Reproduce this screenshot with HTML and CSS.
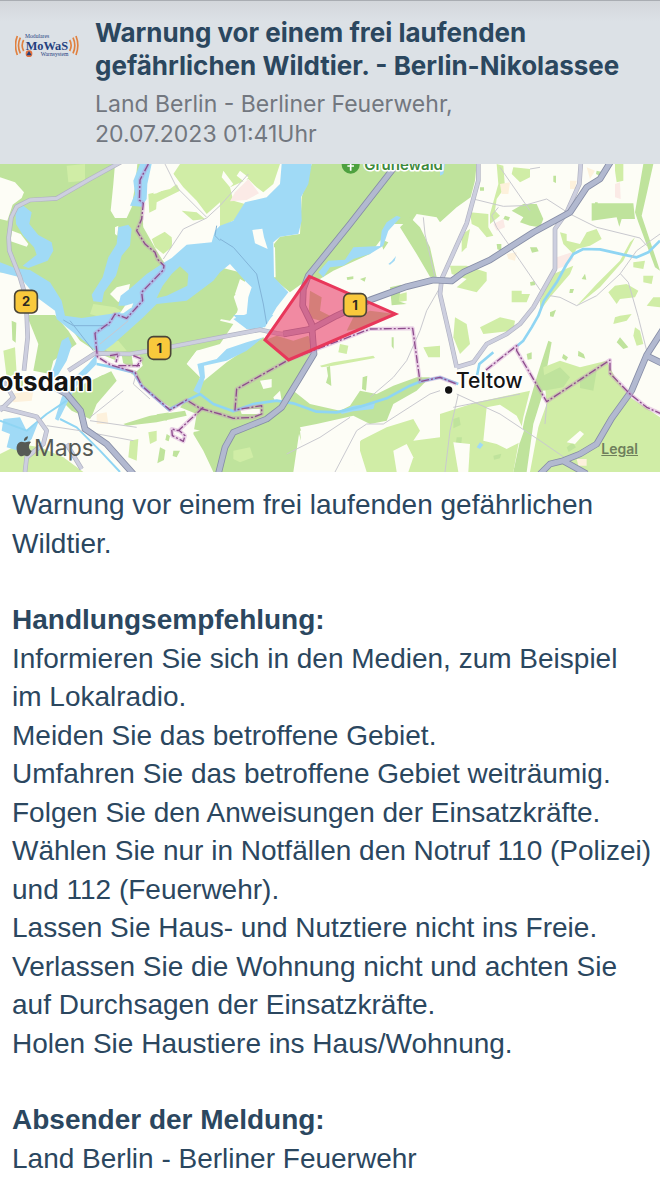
FILE: index.html
```html
<!DOCTYPE html>
<html lang="de">
<head>
    <meta charset="UTF-8">
    <meta name="viewport" content="width=device-width, initial-scale=1.0">
    <title>Warnung - Berlin-Nikolassee</title>
    <link rel="stylesheet" href="styles.css">
</head>
<body>
    <header class="warning-header">
        <svg class="logo" viewBox="0 0 192 72" role="img" aria-label="MoWaS">
            <g class="logo-waves">
                <path d="M26 18Q17 34 26 51M16 11Q5 34 16 58M7 6Q-4 34 7 63"/>
                <path d="M164 18Q173 34 164 51M174 11Q185 34 174 58M183 6Q194 34 183 63"/>
            </g>
            <text class="logo-small" x="30" y="13">Modulares</text>
            <text class="logo-name" x="32" y="48">MoWaS</text>
            <text class="logo-small" x="77" y="65">Warnsystem</text>
            <circle cx="42" cy="59" r="10" fill="#e2703c"/>
            <path d="M42 51l8 13H34z" fill="#24407e"/>
        </svg>
        <div class="warning-heading">
            <h1>Warnung vor einem frei laufenden gefährlichen Wildtier. - Berlin-Nikolassee</h1>
            <p class="source">Land Berlin - Berliner Feuerwehr,<br>20.07.2023 01:41Uhr</p>
        </div>
    </header>

    <div class="map">
        <svg class="map-canvas" viewBox="0 0 1980 924" role="img" aria-label="Karte des Warngebiets">
            <rect class="land" width="1980" height="924"/>

            <!-- woods -->
            <g class="forest">
                <path d="M0 0H430L425 110 430 190 470 260 495 300 660 310 740 330 735 350 690 300 735 350 700 400 660 470 700 480 660 540 590 560 560 600 600 640 580 700 520 735 430 680 400 610 300 570 240 530 160 420 90 330 0 325Z"/>
                <path d="M935 0H1430L1425 50 1412 100 1370 130 1320 175 1310 160 1250 150 1230 180 1180 180 1140 230 1110 270 1000 320 960 345 925 345 870 385 822 345 822 240 840 218 900 210 905 100Z"/>
                <path d="M1230 160L1260 190 1290 250 1310 340 1290 338 1250 270 1200 190Z"/>
                <path d="M600 660L680 595 790 520 865 590 935 560 900 630 880 680 930 720 1020 740 1050 725 1080 680 1130 690 1180 665 1250 640 1290 640 1250 680 1180 720 1160 770 1110 780 1060 755 950 780 900 790 880 924H640L610 860 580 810 590 750 540 730Z"/>
                <path d="M795 528L830 515 880 530 925 515 940 550 866 590Z"/>
                <path d="M930 380L965 400 960 440 990 455 975 475 925 460Z"/>
                <path d="M1060 460L1110 440 1186 450 1090 492 1040 500Z"/>
                <path d="M80 453H165L205 500 230 540 160 590 150 630 100 620 115 540Z"/>
                <path d="M195 720L230 670 380 600 405 625 330 690 270 765 215 740Z"/>
                <path d="M660 330L735 350 730 380 700 395 715 440 690 470 660 465Z"/>
                <path d="M1645 530L1655 535 1625 700 1600 780 1580 924H1540L1575 760 1610 640Z"/>
                <path d="M1775 118H1900L1905 165 1865 165 1858 188 1850 160 1775 170Z"/>
                <path d="M1930 0H1960L1940 90 1925 155 1980 320 1965 310 1915 175 1905 145Z"/>
                <path d="M1535 140L1570 120 1610 120 1630 165 1620 190 1590 185 1560 175 1570 160Z"/>
                <path d="M370 780L450 755 555 740 560 755 470 775 380 785Z"/>
                <path d="M470 730L510 728 500 770 470 760Z"/>
            </g>

            <g class="meadow">
                <path d="M200 5L255 0 255 50 205 55Z"/>
                <path d="M540 0H660V115L620 150 590 110 550 70 520 30Z"/>
                <path d="M445 90L510 75 530 60 540 80 470 115 468 140 448 150Z"/>
                <path d="M545 140L590 145 615 165 575 170 545 160Z"/>
                <path d="M455 225L500 200 518 215 515 250 490 270 465 250Z"/>
                <path d="M660 0H840L820 60 790 85 770 70 745 45 690 70 700 110 735 120 720 160 680 180 660 190Z"/>
                <path d="M280 420L345 430 380 450 320 465 270 450Z"/>
                <path d="M1640 720L1630 610 1680 590 1740 610 1820 590 1845 640 1890 700 1980 760V924H1590L1615 790Z"/>
                <path d="M1320 750L1430 715 1590 680 1570 760 1540 924H1320Z"/>
                <path d="M1080 830L1160 790 1240 765 1260 800 1240 830 1320 820V924H1180L1100 924 1080 860Z"/>
                <path d="M1365 460L1400 480 1410 540 1380 570 1360 520Z"/>
                <path d="M1440 490L1500 460 1545 470 1540 500 1450 510Z"/>
                <path d="M0 870L60 840 120 850 190 880 250 924H0Z"/>
                <path d="M700 860L750 850 760 880 720 895 700 885Z"/>
                <path d="M1490 0L1510 5 1515 70 1490 105 1485 140 1500 155 1470 180 1470 150 1495 60Z"/>
                <path d="M1540 10L1590 15 1590 40 1560 55 1535 30Z"/>
                <path d="M1845 0H1870V50L1850 55 1845 20Z"/>
                <path d="M1410 145L1465 150 1465 190 1480 215 1460 220 1435 190 1415 180Z"/>
                <path d="M1395 205L1410 195 1400 250 1385 265 1385 225Z"/>
                <path d="M1350 305L1400 305 1460 325 1460 350 1430 385 1370 370 1400 345 1355 330Z"/>
                <path d="M1535 380H1565V390H1590L1580 415H1535Z"/>
                <path d="M1680 205L1700 210 1700 230 1740 240 1760 205 1790 195 1805 225 1770 245 1730 255 1720 270 1690 240Z"/>
                <path d="M1660 330L1720 305 1710 330 1650 400 1620 440 1620 410Z"/>
                <path d="M1730 425L1790 360 1860 290 1890 235 1905 220 1870 290 1800 370 1750 410Z"/>
                <path d="M1825 385L1845 365 1880 360 1915 380 1905 400 1860 405 1850 420Z"/>
                <path d="M1900 295L1935 290 1930 315 1900 310Z"/>
                <path d="M1930 335L1960 335 1955 360 1930 355Z"/>
                <path d="M1860 455L1895 450 1880 470 1840 480 1845 460Z"/>
                <path d="M1905 490L1920 500 1930 540 1910 545 1900 515Z"/>
                <path d="M1960 400H1980V430L1940 425Z"/>
                <path d="M960 605L1000 595 1120 575 1125 582 1000 605 965 610Z"/>
                <path d="M1020 540L1045 545 1040 570 1015 565Z"/>
                <path d="M1270 550L1320 545V580L1285 580Z"/>
                <path d="M1180 395L1220 385 1220 410 1190 415Z"/>
                <path d="M1010 840L1040 840 1030 880 1010 870Z"/>
                <path d="M300 540L355 530 380 560 330 570Z"/>
                <path d="M10 560L45 550 50 630 20 640Z"/>
                <path d="M445 805L470 800 470 830 450 840Z"/>
                <path d="M390 830L415 825 410 890 385 880Z"/>
            </g>

            <!-- scattered small greens -->
            <g class="forest">
                <path d="M1440 70h12v10h-12zM1515 155l15 5-5 10-15-5zM1490 240h14v20l-12-4zM1590 250l20 0 6 12-20 4zM1660 35l8 0v22l-8-4zM1790 20l16 4-6 12-12-6zM1785 115h8v6h-8zM1590 355l14-4 2 12-14 2zM1710 375l12 0-4 12-10 0zM1745 345l10-16 4 18zM1650 445l18-8-8 22-10-2zM1860 520l25 30-15 5-20-20zM1735 560l16 10 5 14-22-8zM1580 570l15-5 0 20-12 2zM1690 570l14 10-6 10-12-8z"/>
                <path d="M1090 255l15 0-10 20zM1080 345l18-6-4 14zM1040 340l20-3 0 8-18 3zM1140 225l25 10-15 22zM1170 370l34-8-8 50 24 8-45 4zM1230 360l10-2 0 14-10 0z"/>
                <path d="M980 610l10-4 4 60-16-10 6-20zM1088 640l14-5-4 45-12-5zM1175 520l6 0 0 35-6-8zM900 790l15 45-8 8-15-50zM1020 800l15-10-5 20zM830 540l25 30-18 10z"/>
                <path d="M35 470l14 6-2 60-10-8zM55 640l16 6-6 40-12-12zM480 850l16 8-4 30-20 10zM520 860l20 0-10 20-12-4zM295 640l15-8-5 20zM500 810l10 6-4 16-10-4z"/>
                <path d="M1360 765l18-6 4 24-22 10zM1370 820l16 0-4 34-16-4zM1700 850l18-14 10 14-22 14zM1480 875l24-6-4 14-18 4z"/>
                <path d="M1620 640l60-30 30 30-20 30-60 10zM1740 640l50-20-10 60-40-8z"/>
            </g>

            <!-- open ground inside the woods -->
            <g class="land">
                <path d="M0 40L45 55 72 85 65 102 38 122 22 170 0 165Z"/>
                <path d="M36 200L62 210 85 240 80 248 32 232Z"/>
                <path d="M345 0H412L406 60 395 130 380 162 345 162 332 140 340 60Z"/>
                <path d="M460 90L470 60 450 40 455 0H500L540 60 525 62 470 88Z"/>
                <path d="M430 185L440 150 470 135 530 95 545 140 580 170 640 170 660 185 640 220 560 245 520 275 515 220 490 200 455 225Z"/>
                <path d="M345 190L355 185 352 215 345 210Z"/>
                <path d="M330 390L350 370 390 360 385 385 355 415 340 400Z"/>
                <path d="M670 20L700 60 690 70 665 40ZM720 20L745 40 735 55 710 35Z"/>
                <path d="M720 345L755 365 745 400 740 450 710 450 720 410 705 390Z"/>
                <path d="M818 250L825 250 827 340 818 340Z"/>
                <path d="M560 600L590 560 640 552 690 530 775 495 790 520 720 545 680 590 600 600Z"/>
                <path d="M290 590L360 595 390 620 400 640 450 690 510 745 440 755 350 780 270 770 290 720 350 650 330 615Z"/>
                <path d="M345 575L365 572 370 600 400 608 395 575 420 575 428 605 410 622 350 605Z"/>
                <path d="M780 650L815 645 815 670 790 675ZM720 735H780V750H725Z"/>
                <path d="M820 700L840 680 845 710 825 712Z"/>
                <path d="M950 690L1000 695 1005 725 940 715Z"/>
                <path d="M1190 740L1230 705 1265 690 1290 690 1250 730 1200 755Z"/>
                <path d="M900 800L990 780 1060 790 1090 780 1100 800 1070 850 1060 924H900L905 850Z"/>
                <path d="M1180 860L1220 840 1240 880 1225 924H1190Z"/>
                <path d="M1460 730L1500 722 1550 755 1572 800 1560 835 1520 855 1490 840 1450 830Z"/>
                <path d="M1360 835L1410 840 1405 924H1375Z"/>
                <path d="M1700 835L1725 840 1752 810 1740 800Z"/>
                <path d="M550 810L600 800 560 790Z"/>
            </g>

            <!-- built-up areas -->
            <g class="town">
                <path d="M690 112L705 85 745 45 777 88 740 108Z"/>
                <path d="M1845 60L1860 55 1862 105 1845 100Z"/>
                <path d="M1670 280L1715 265 1720 285 1700 305 1670 315Z"/>
                <path d="M1480 180L1510 165 1515 190 1490 200Z"/>
            </g>
            <g class="quarter">
                <path d="M1500 60L1530 55 1525 90 1505 90ZM1520 270L1550 265 1545 290 1525 285ZM1730 885H1760V905H1735ZM30 690L100 680 95 710 40 715ZM290 750L320 745 325 780 290 780ZM1710 50L1730 50 1725 75 1710 75ZM1760 10L1785 20 1770 45Z"/>
            </g>

            <!-- lakes and rivers -->
            <g class="water">
                <path d="M45 130L70 125 95 145 88 180 115 213 155 235 160 260 143 290 85 312 68 305 110 272 102 250 70 215 48 180Z"/>
                <path d="M355 190L385 182 395 195 390 245 365 275 348 335 312 385 306 415 280 412 275 392 308 340 325 280 350 240Z"/>
                <path d="M420 0H455L442 60 440 105 425 128 390 125 405 90 400 50Z"/>
                <path d="M0 295L45 312 90 318 150 355 185 410 195 455 245 462 330 450 380 440 400 425 355 425 362 395 395 370 440 330 485 300 515 282 560 242 635 235 645 200 660 185 700 170 735 115 800 100 840 60 845 0H935L925 60 903 100 905 170 895 210 840 218 820 235 822 340 865 385 830 430 795 490 770 490 740 495 700 465 740 450 745 400 755 370 735 350 690 300 660 325 640 350 560 410 470 420 430 460 385 500 340 540 300 570 270 545 200 490 170 465 165 440 110 400 60 340 0 325Z"/>
                <path d="M700 453H820L780 500 740 495Z"/>
                <path d="M955 325L985 290 1035 287 1060 250 1140 246 1145 200 1160 175 1190 155 1202 160 1165 200 1150 245 1110 270 1060 285 1030 305 990 310 970 340Z"/>
                <path d="M580 680L600 640 592 600 650 585 680 555 740 535 790 520 740 560 680 590 612 605 615 640 598 690Z"/>
                <path d="M185 530L205 518 215 545 200 590 170 640 150 640 165 600Z"/>
                <path d="M290 570L290 600 240 650 210 700 175 770 165 765 185 700 225 640 265 600Z"/>
                <path d="M10 765L60 760 80 800 115 775 95 825 60 862 20 850 30 810 5 800Z"/>
                <path d="M1020 742L1060 725 1125 718 1120 735 1060 742 1025 750Z"/>
                <path d="M1320 0H1335L1330 30 1320 35Z"/>
                <path d="M1165 300L1175 292 1188 276 1184 290 1170 302ZM1430 850L1440 835 1450 842 1440 855Z"/>
            </g>
            <path class="forest" d="M540 307L565 330 562 365 500 395 470 402 488 365 515 330Z"/>
            <path class="land" d="M757 198L787 194 792 220 803 255 765 238Z"/>
            <path class="land" d="M360 448L375 425 400 418 395 430 370 448Z"/>
            <g class="stream">
                <path d="M1980 230L1945 265 1910 280 1870 272 1800 256 1750 255 1720 270 1700 300 1670 355 1632 410 1615 455 1595 490 1570 530 1552 545"/>
                <path d="M510 735L560 710 600 690 640 720 700 742 760 720 830 710 880 718 950 743 1010 745 1080 728 1160 703 1230 665 1260 653 1320 640 1375 660"/>
                <path d="M1430 640L1438 600 1480 565M290 600L340 610 400 625 425 665 510 740"/>
                <path class="thin" d="M0 770L80 800 140 750 200 710M180 765L230 790 300 860 360 924"/>
            </g>
            <path class="ferry" d="M190 468L220 485H330M210 470L280 560M660 225L700 250 770 330 790 420 800 480M650 185L645 215 660 230"/>

            <!-- minor roads -->
            <g class="path">
                <path d="M495 0L530 70 620 160M660 125L620 162 550 195 490 285M660 125L745 30"/>
                <path d="M1420 105L1510 127 1570 125 1640 105 1710 150 1790 190 1920 222 1940 245"/>
                <path d="M1495 130L1475 155 1490 190 1560 290 1630 392M1650 395L1680 400 1730 425 1790 395 1860 330 1910 260 1980 210"/>
                <path d="M1862 330L1885 355 1915 460 1940 560M1270 160L1275 210 1305 340M1320 370L1280 440 1260 500 1220 590 1180 640 1110 700"/>
                <path d="M860 870L960 820 1050 760M1005 924L1070 800 1100 780 1150 780 1290 690 1320 680"/>
                <path d="M1370 690L1500 750 1620 830 1700 885M1375 690L1350 800 1335 924M1640 720L1635 780"/>
                <path d="M140 785L240 800 400 830M270 770L410 790M410 625L400 660 450 705M270 760L370 680"/>
                <path d="M300 540L385 470M1500 10L1590 140M1620 10L1590 15M1360 730L1560 690"/>
            </g>

            <!-- secondary roads -->
            <g class="road-case">
                <path id="r1" d="M370 -10L270 45 170 103 90 108 50 128 34 160 26 220 28 260 60 340 78 400 83 520 72 620"/>
                <path id="r2" d="M1435 -10L1435 50 1400 178 1325 345 1320 390 1350 520 1370 610"/>
                <path id="r3" d="M1743 -10L1738 60 1700 145 1665 195 1665 315 1600 430 1560 480 1520 510 1460 540 1420 595 1370 610"/>
                <path id="r4" d="M860 512L830 508 780 497 660 520 480 555 390 570 285 568 205 620"/>
                <path id="r5" d="M0 730L110 758 140 800 130 840 80 880 75 924M0 740L40 700 10 650M200 840L245 915"/>
            </g>
            <g class="road">
                <use href="#r1"/><use href="#r2"/><use href="#r3"/><use href="#r4"/><use href="#r5"/>
            </g>

            <!-- motorways -->
            <g class="motorway-case">
                <path id="m1" d="M1200 -12L1050 180 925 335 910 375 908 425 935 480 942 570 900 640 845 730 800 765 700 805 675 850 655 930"/>
                <path id="m2" d="M1835 -12L1800 45 1760 70 1710 145 1600 205 1470 288 1390 325 1355 351 1300 348 1220 368 1110 408 1010 455 935 495 850 510"/>
                <path id="m3" d="M155 665L200 690 242 740 255 795 320 840 400 930"/>
                <path id="m4" d="M1990 495L1940 573 1895 680 1835 763 1790 840 1740 870 1690 890 1650 900 1620 930M1685 888L1760 930M1940 575L1990 600"/>
            </g>
            <g class="motorway">
                <use href="#m1"/><use href="#m2"/><use href="#m3"/><use href="#m4"/>
            </g>

            <!-- city boundary -->
            <g class="border-glow">
                <path id="b1" d="M445 0L420 48 418 108 430 118 425 165 410 200 435 240 465 265 472 285 492 305 490 318 425 385 428 410 380 463 345 450 330 475 285 508 292 578 330 602 405 625 425 665 510 738 560 708 600 733 660 750 700 763 760 760 785 750 785 725 705 738 710 675 865 588 1110 495 1238 493 1260 653 1320 640 1370 660"/>
                <path id="b2" d="M1458 618L1550 545 1550 560 1640 713 1830 588 1830 628 1890 690 1940 730 1985 750"/>
                <path id="b3" d="M330 575L355 570 348 595M400 575L425 585 410 608M355 605L420 605M610 730L535 800 515 795 517 815 550 832 555 815 535 797"/>
            </g>
            <g class="border">
                <use href="#b1"/><use href="#b2"/><use href="#b3"/>
            </g>

            <!-- affected area -->
            <path class="area" d="M928 337L1186 450 866 588 795 528Z"/>

            <g class="shield">
                <rect x="44" y="379" width="68" height="68" rx="16"/>
                <text x="78" y="427">2</text>
                <rect x="444" y="518" width="68" height="68" rx="16"/>
                <text x="478" y="566">1</text>
                <rect x="1031" y="389" width="68" height="68" rx="16"/>
                <text x="1065" y="437">1</text>
            </g>

            <circle cx="1052" cy="2" r="27" fill="#4da13f"/>
            <path d="M1052 -8V20M1042 6H1062" stroke="#fff" stroke-width="5"/>
            <text class="label park" x="1093" y="17">Grunewald</text>
            <text class="label city" x="278" y="681">Potsdam</text>
            <circle cx="1346" cy="678" r="14" fill="#fff"/>
            <circle cx="1346" cy="678" r="11" fill="#111"/>
            <text class="label town-name" x="1368" y="673">Teltow</text>

            <g class="maps-brand">
                <path d="M73 835C80 835 85 830 93 834C84 843 85 855 95 861C91 872 85 878 80 877C75 874 71 874 66 877C56 878 48 861 50 848C52 834 64 830 73 835ZM72 831C71 824 77 818 84 817C84 825 79 831 72 831Z"/>
                <text x="102" y="875">Maps</text>
            </g>
        </svg>
        <a class="legal" href="#legal">Legal</a>
    </div>

    <main class="warning-text">
        <p>Warnung vor einem frei laufenden gefährlichen Wildtier.</p>

        <h2>Handlungsempfehlung:</h2>
        <p>Informieren Sie sich in den Medien, zum Beispiel im Lokalradio.</p>
        <p>Meiden Sie das betroffene Gebiet.</p>
        <p>Umfahren Sie das betroffene Gebiet weiträumig.</p>
        <p>Folgen Sie den Anweisungen der Einsatzkräfte.</p>
        <p>Wählen Sie nur in Notfällen den Notruf 110 (Polizei) und 112 (Feuerwehr).</p>
        <p>Lassen Sie Haus- und Nutztiere nicht ins Freie.</p>
        <p>Verlassen Sie die Wohnung nicht und achten Sie auf Durchsagen der Einsatzkräfte.</p>
        <p>Holen Sie Haustiere ins Haus/Wohnung.</p>

        <h2>Absender der Meldung:</h2>
        <p>Land Berlin - Berliner Feuerwehr</p>
    </main>
</body>
</html>
```
FILE: styles.css
```css
* {
    box-sizing: border-box;
}
body {
    margin: 0;
    background: #fff;
    color: #2b475f;
    font-family: "Liberation Sans", Arial, sans-serif;
}
h1, h2, p {
    margin: 0;
}

/* header */
.warning-header {
    display: flex;
    align-items: flex-start;
    gap: 16px;
    padding: 15px 12px 15px 15px;
    background: linear-gradient(#d3d7db, #dce1e6 20px);
    border-top: 1px solid #a9adb2;
    font-family: Inter, sans-serif;
}
.logo {
    flex: none;
    width: 64px;
    height: 24px;
    margin-top: 18px;
}
.logo-waves {
    fill: none;
    stroke: #e0803f;
    stroke-width: 5;
}
.logo text {
    fill: #24407e;
    font-family: "Liberation Serif", serif;
}
.logo .logo-small {
    font-size: 17px;
}
.logo .logo-name {
    font-size: 37px;
    font-weight: bold;
}
.warning-heading {
    flex: 1;
}
.warning-heading h1 {
    font-size: 26px;
    font-weight: 700;
    line-height: 33px;
}
.source {
    margin-top: 7px;
    color: #72777f;
    font-size: 23px;
    line-height: 30px;
}

/* map */
.map {
    position: relative;
}
.map-canvas {
    display: block;
    width: 100%;
    font-family: Inter, sans-serif;
}
.land {
    fill: #fdfdf6;
}
.forest {
    fill: #bfe39c;
}
.meadow {
    fill: #d0eda6;
}
.town {
    fill: #fbeae6;
}
.quarter {
    fill: #fdf1dc;
}
.water {
    fill: #a0daf6;
}
.stream {
    fill: none;
    stroke: #8fd5f3;
    stroke-width: 8;
    stroke-linejoin: round;
}
.stream .thin {
    stroke-width: 6;
}
.ferry {
    fill: none;
    stroke: #82b4d8;
    stroke-width: 3;
}
.path {
    fill: none;
    stroke: #c9c9cf;
    stroke-width: 3;
}
.road-case,
.road,
.motorway-case,
.motorway,
.border,
.border-glow {
    fill: none;
    stroke-linejoin: round;
}
.road-case {
    stroke: #b1b3c2;
    stroke-width: 14;
}
.road {
    stroke: #cdcfdf;
    stroke-width: 10;
}
.motorway-case {
    stroke: #868da6;
    stroke-width: 20;
}
.motorway {
    stroke: #b2b9d0;
    stroke-width: 15;
}
.border-glow {
    stroke: #c77fc8;
    stroke-opacity: 0.35;
    stroke-width: 12;
}
.border {
    stroke: #8d4c8c;
    stroke-width: 4;
    stroke-dasharray: 24 6 6 6;
}
.area {
    fill: #e82c5c;
    fill-opacity: 0.55;
    stroke: #e8375a;
    stroke-width: 9;
}
.shield rect {
    fill: #f9c93c;
    stroke: #4a4538;
    stroke-width: 5;
}
.shield text {
    fill: #2d2a22;
    font-size: 39px;
    font-weight: 700;
    text-anchor: middle;
}
.label {
    fill: #151515;
    paint-order: stroke;
    stroke: #fff;
    stroke-width: 9;
    stroke-linejoin: round;
}
.label.city {
    font-size: 78px;
    font-weight: 700;
    text-anchor: end;
}
.label.town-name {
    font-size: 63px;
    font-weight: 500;
}
.label.park {
    fill: #3f8a3c;
    font-size: 45px;
    font-weight: 600;
}
.maps-brand {
    fill: #565a55;
    font-size: 69px;
}
.legal {
    position: absolute;
    right: 22px;
    bottom: 13px;
    color: #6f7f5c;
    font-family: Inter, sans-serif;
    font-size: 14px;
    font-weight: 600;
    line-height: 20px;
}

/* message */
.warning-text {
    padding: 14px 7px 14px 12px;
    font-size: 28px;
    line-height: 1.375;
}
.warning-text h2 {
    margin-top: 38px;
    font-size: 28px;
}
```
